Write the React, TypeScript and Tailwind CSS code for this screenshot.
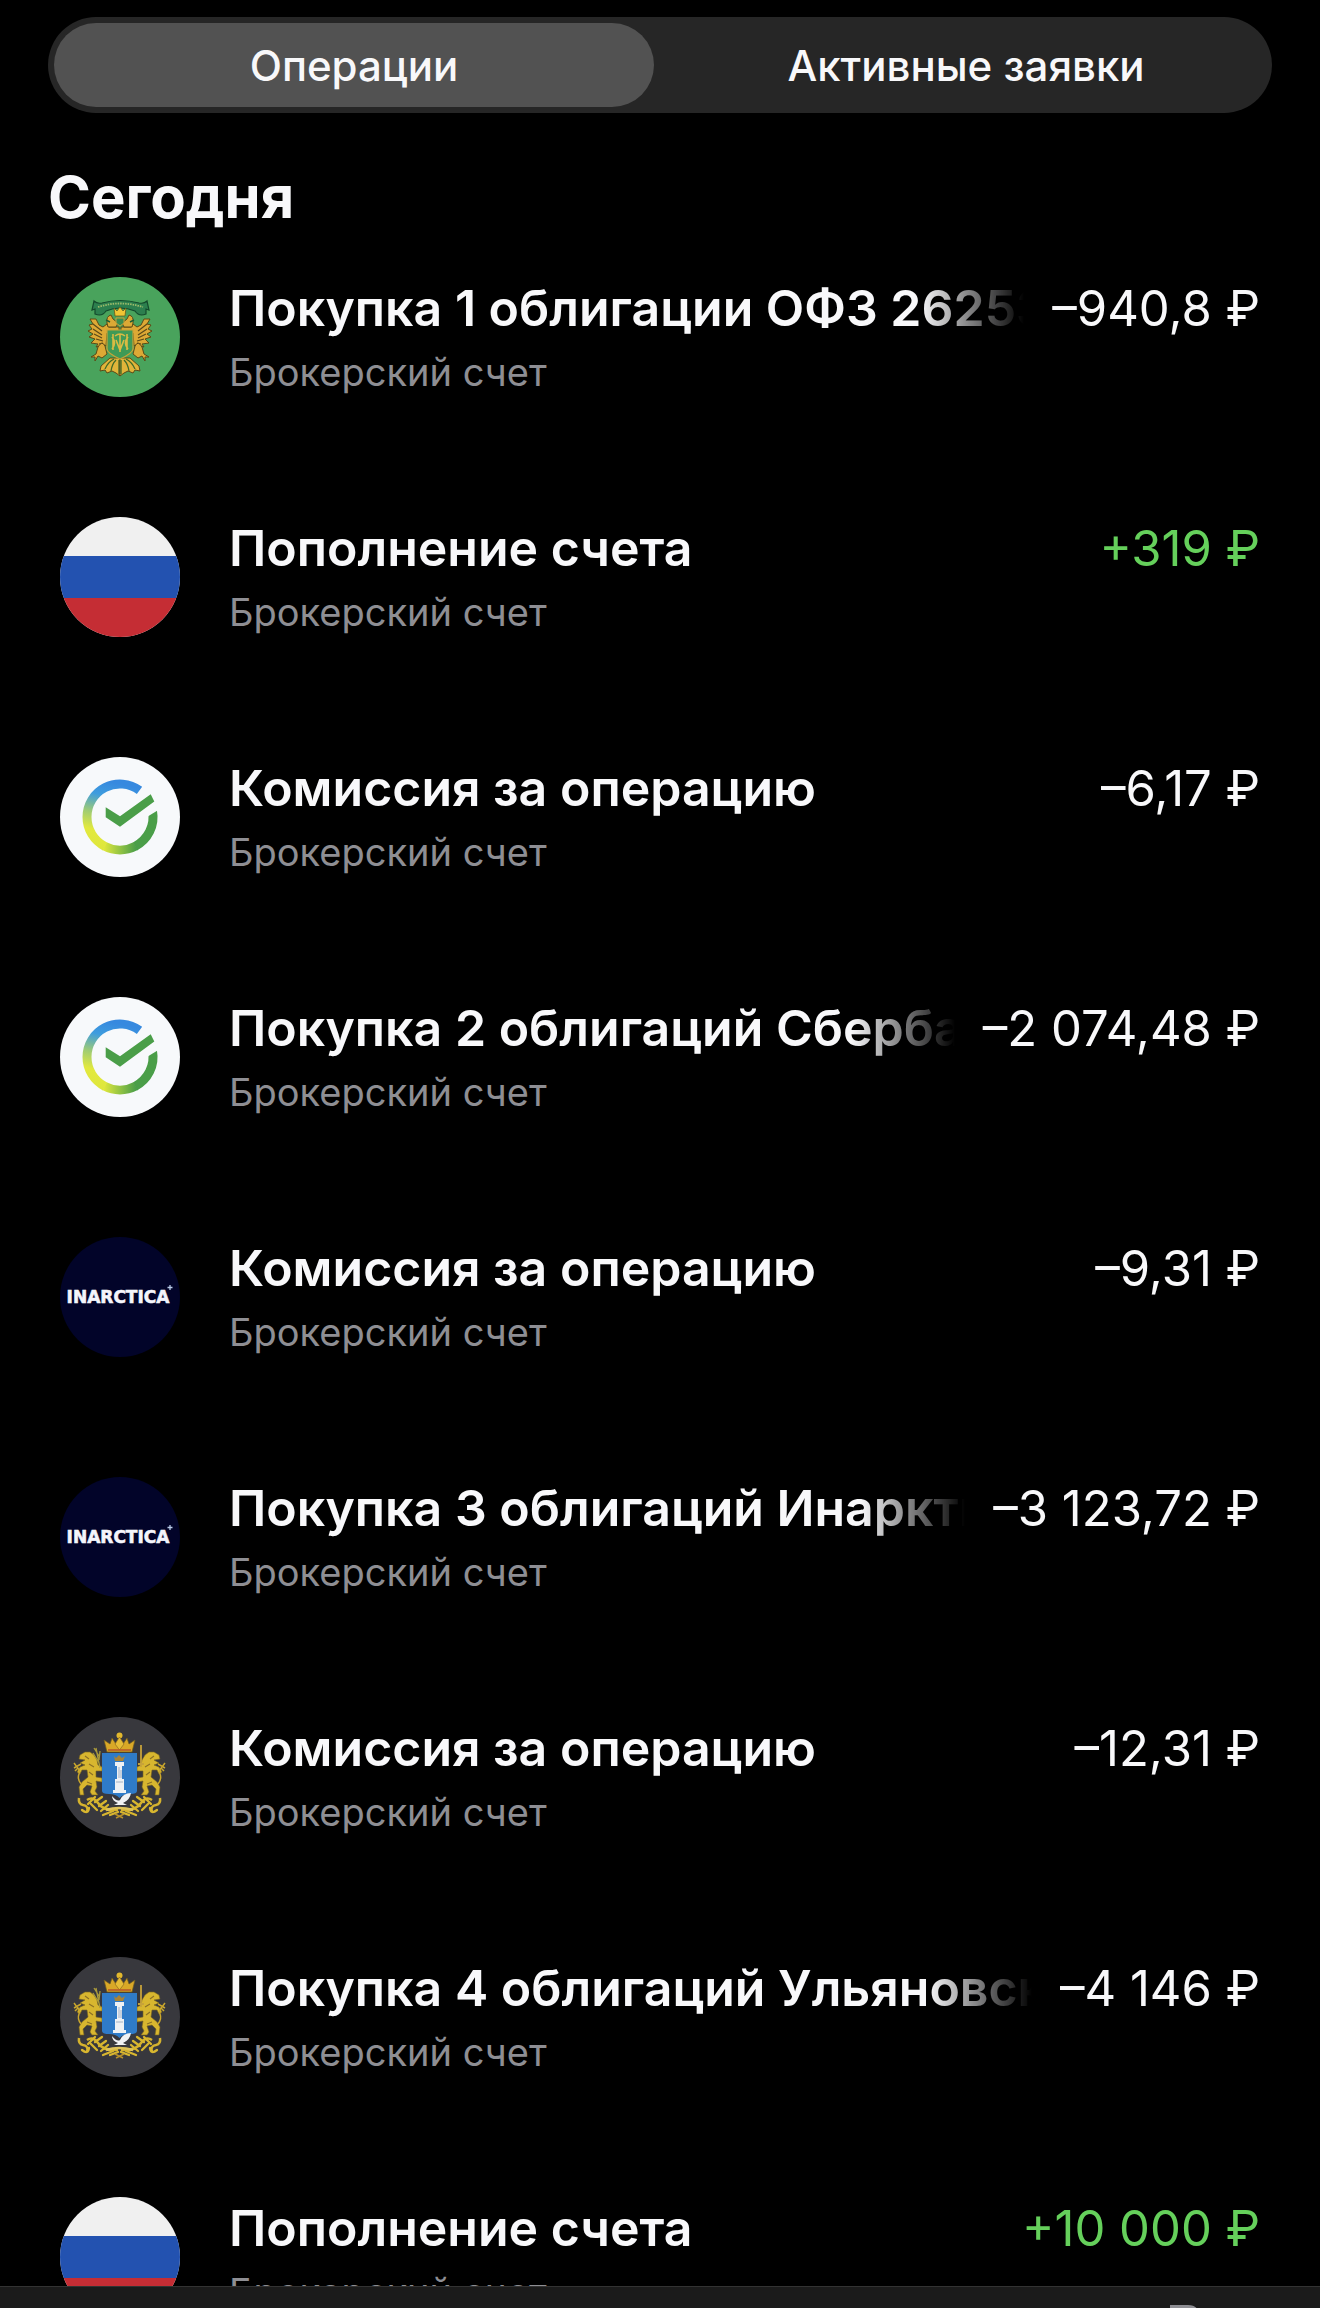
import React, { useState } from "react"

type Logo = "ofz" | "russia" | "sber" | "inarctica" | "ulyanovsk"

type Operation = {
  id: number
  logo: Logo
  title: string
  amount: string
  income?: boolean
}

const operations: Operation[] = [
  { id: 1, logo: "ofz", title: "Покупка 1 облигации ОФЗ 26253", amount: "–940,8 ₽" },
  { id: 2, logo: "russia", title: "Пополнение счета", amount: "+319 ₽", income: true },
  { id: 3, logo: "sber", title: "Комиссия за операцию", amount: "–6,17 ₽" },
  { id: 4, logo: "sber", title: "Покупка 2 облигаций Сбербанк", amount: "–2 074,48 ₽" },
  { id: 5, logo: "inarctica", title: "Комиссия за операцию", amount: "–9,31 ₽" },
  { id: 6, logo: "inarctica", title: "Покупка 3 облигаций Инарктика", amount: "–3 123,72 ₽" },
  { id: 7, logo: "ulyanovsk", title: "Комиссия за операцию", amount: "–12,31 ₽" },
  { id: 8, logo: "ulyanovsk", title: "Покупка 4 облигаций Ульяновская", amount: "–4 146 ₽" },
  { id: 9, logo: "russia", title: "Пополнение счета", amount: "+10 000 ₽", income: true },
]

const tabs = ["Операции", "Активные заявки"]

const OfzLogo = () => (
  <svg viewBox="0 0 120 120" className="size-full bg-[#49a35c]" aria-hidden="true">
    {/* ribbon */}
    <path d="M32 33 34 24Q37 27 42 26 60 21 79 26 84 27 87 24L89 33 86 32 86 37Q79 40 75 34Q60 28 46 34Q42 40 35 37L35 32Z" fill="#2c7f4e" stroke="#134a2c" strokeWidth="1.2" />
    <path d="M38 30Q60 23 83 30" fill="none" stroke="#9dbb6a" strokeWidth="1.8" strokeDasharray="1.5 1" />
    {/* one half of the eagle, mirrored for the other */}
    {[0, 1].map((side) => (
      <g key={side} transform={side ? "matrix(-1 0 0 1 120 0)" : undefined}>
        <path
          d="M59 50 49 50 47 47 43 50 39 48 36 42 30 42 33 47 29 48 32 52 28 54 33 57 29 60 35 62 31 66 38 67 36 70 44 68 46 69 47 56 59 54Z"
          fill="#dca935"
          stroke="#5b4a17"
          strokeWidth="1"
        />
        <path d="M33 47 42 54M33 52 42 58M34 57 42 61M36 62 43 64M39 67 43 66" stroke="#5c4a18" strokeWidth="1.2" />
        <path d="M47 46Q46 39 51 38L53 42 58 46 56 50 48 50Z" fill="#dca935" stroke="#5b4a17" strokeWidth="1" />
        <path d="M46 43 50 45" stroke="#1f5c34" strokeWidth="1.5" />
        <path d="M38 70Q42 63 45 69L47 77 42 81 38 79 35 84 35 80 31 80 36 77Z" fill="#dca935" stroke="#5b4a17" strokeWidth="1" />
        <path d="M60 81 50 81 41 89 40 94 45 93 47 96 52 94 56 96 60 99Z" fill="#e0b43a" stroke="#5b4a17" strokeWidth="1" />
        <path d="M54 82Q48 85 45 92M56 83Q52 87 51 94M59 83V97" fill="none" stroke="#3f6a28" strokeWidth="1.3" />
      </g>
    ))}
    <path d="M47 53H73V72Q73 76 60 82Q47 76 47 72Z" fill="#3f9a56" stroke="#c9a336" strokeWidth="1.2" />
    <path d="M53 57V73M52 60Q57 66 52 72M60 57V75M55 59Q60 55 65 59M67 57V73M68 60Q63 66 68 72M56 63 60 73 64 63" fill="none" stroke="#d9bb43" strokeWidth="1.6" />
    <path d="M54 31 57 34 60 30 63 34 66 31 65 39H55Z" fill="#f0c534" stroke="#6a5a1a" strokeWidth=".8" />
    <path d="M56 41H64V46L60 49 56 46Z" fill="#3b8d50" stroke="#c9a336" />
  </svg>
)

const RussiaLogo = () => (
  <svg viewBox="0 0 120 120" className="size-full bg-[#f0f0f0]" aria-hidden="true">
    <rect y="39" width="120" height="42" fill="#2352b0" />
    <rect y="81" width="120" height="39" fill="#c52d34" />
  </svg>
)

const SberLogo = () => (
  <svg viewBox="0 0 120 120" className="size-full bg-[#f7f9fb]" aria-hidden="true">
    <defs>
      <linearGradient id="sber-left" gradientUnits="userSpaceOnUse" x1="60" y1="27" x2="45" y2="92">
        <stop offset="0" stopColor="#3689df" />
        <stop offset=".22" stopColor="#3f9dde" />
        <stop offset=".5" stopColor="#a0cc72" />
        <stop offset=".75" stopColor="#e2e93e" />
        <stop offset="1" stopColor="#dfe73d" />
      </linearGradient>
      <linearGradient id="sber-bottom" gradientUnits="userSpaceOnUse" x1="44" y1="0" x2="76" y2="0">
        <stop offset="0" stopColor="#dfe73d" />
        <stop offset=".5" stopColor="#93c443" />
        <stop offset="1" stopColor="#4a9e48" />
      </linearGradient>
    </defs>
    <path d="M75 89.4A33 33 0 0 0 92.500 54" fill="none" stroke="#4a9e48" strokeWidth="9" />
    <path d="M44.500 89.100A33 33 0 0 0 75.500 89.100" fill="none" stroke="url(#sber-bottom)" strokeWidth="9" />
    <path d="M79.500 33.400A33 33 0 0 0 27 60A33 33 0 0 0 45 89.400" fill="none" stroke="url(#sber-left)" strokeWidth="9" />
    <path d="M86 60.500 100 52 97 47 84 53Z" fill="#f7f9fb" />
    <path d="M45.700 50.300 60 59.300 90.700 37.300 94.300 44.500 60 69.700 45.700 60.300Z" fill="#4a9e48" />
  </svg>
)

const InarcticaLogo = () => (
  <svg viewBox="0 0 120 120" className="size-full bg-[#020429]" aria-hidden="true">
    <text
      x="58"
      y="66"
      textAnchor="middle"
      fill="#f4f5fb"
      stroke="#f4f5fb"
      strokeWidth=".6"
      fontFamily="DejaVu Sans, sans-serif"
      fontSize="17"
      fontWeight="700"
    >
      INARCTICA
    </text>
    <path d="M110 48V53M107.500 50.500H112.500" stroke="#b9cbe8" strokeWidth="1.300" />
  </svg>
)

const UlyanovskLogo = () => (
  <svg viewBox="0 0 120 120" className="size-full bg-[#38383d]" aria-hidden="true">
    {/* lion and oak branch, mirrored on the right */}
    {[0, 1].map((side) => (
      <g key={side} transform={side ? "matrix(-1 0 0 1 119 0)" : undefined}>
        <path
          d="M20 38 25 35 30 35 34 38 37 43 38 48 42 50 42 54 36 54 36 60 42 61 42 65 36 64 37 70 35 74 38 78 32 78 30 75 32 69 27 68 23 72 24 78 20 78 19 70 22 65 28 60 27 53 22 53 20 57 17 55 20 50 25 48 20 46 25 43 19 42Z"
          fill="#d8b62f"
          stroke="#7a6420"
          strokeWidth=".6"
        />
        <path d="M25 39 29 42M29 47 34 50M29 55 33 58M27 65 32 67" stroke="#8c7025" strokeWidth="1.100" />
        <path d="M21 67Q17 62 19 57Q20 52 17 50L14 46M14 51 21 47M18 51 15 54" fill="none" stroke="#caa72d" strokeWidth="1.500" />
        <path d="M19 81Q18 87 23 88Q29 89 27 95M27 83Q33 79 38 86Q43 94 58 93" fill="none" stroke="#d5b22e" strokeWidth="2.500" />
        <path d="M22 93Q28 98 29 91M28 87 35 80M35 85 42 80M39 89 46 84M41 94 48 88M43 98 53 94M50 98 58 95M31 87 37 93" fill="none" stroke="#d8b62f" strokeWidth="2.300" strokeLinecap="round" />
        <path d="M55 97 63 101" stroke="#b6902a" strokeWidth="1.500" />
        <path d="M60 35H47L44 23 50 27 52 21 56 27 60 20" fill="#d9a827" stroke="#6d5a20" strokeWidth=".7" />
      </g>
    ))}
    <path d="M40 51 36 31M39 46 33 36M39 43 40 34M39 39 34 31" stroke="#aa9a3a" strokeWidth="1.300" />
    <path d="M81 50V28M78 47H84" stroke="#c7a23a" strokeWidth="1.800" />
    <path d="M42 36H77V74Q77 77 70 77Q63 77 59.500 81Q56 77 49 77Q42 77 42 74Z" fill="#2f7bc8" />
    <circle cx="59.500" cy="18.500" r="3" fill="#e2b82d" />
    <path d="M59.500 20 55 27 59.500 33 64 27Z" fill="#e5bd37" stroke="#8d671e" strokeWidth=".7" />
    <path d="M48 33H71" stroke="#b5542d" strokeWidth="1.500" />
    <path d="M54 39 56 41 59 38 62 41 65 39 63 44H55Z" fill="#a88336" />
    <path d="M55 45H64V49H62V62H64V66H55V62H57V49H55ZM55 66H64V73H66V76H53V73H55Z" fill="#eef1f4" />
    <path d="M59 50V61M61 53V61M56 65H63" stroke="#a4b2c5" strokeWidth="1" />
    <path d="M52 79Q57 85 60 83Q63 76 71 76Q70 83 63 86L67 88H54L58 86Q52 84 52 79Z" fill="#f1f2f4" />
    <path d="M46 93Q59 89 73 93" fill="none" stroke="#dfc35b" strokeWidth="2.500" />
  </svg>
)

const logos: Record<Logo, React.ReactNode> = {
  ofz: <OfzLogo />,
  russia: <RussiaLogo />,
  sber: <SberLogo />,
  inarctica: <InarcticaLogo />,
  ulyanovsk: <UlyanovskLogo />,
}

const OperationItem = ({ item }: { item: Operation }) => {
  return (
    <li className="flex h-[240px] items-start gap-[49px]">
      <span className="size-[120px] shrink-0 overflow-hidden rounded-full">{logos[item.logo]}</span>
      <div className="min-w-0 flex-1">
        <div className="flex items-baseline gap-7">
          <h2 className="min-w-0 flex-1 overflow-hidden whitespace-nowrap text-[50px] font-semibold leading-[62px] [mask-image:linear-gradient(to_right,black_calc(100%-104px),transparent)]">
            {item.title}
          </h2>
          <p className={`shrink-0 text-[49px] leading-[60px] ${item.income ? "text-[#65d05b]" : ""}`}>{item.amount}</p>
        </div>
        <p className="mt-[10px] text-[38px] leading-[46px] text-[#8e8e93]">Брокерский счет</p>
      </div>
    </li>
  )
}

const App = () => {
  const [active, setActive] = useState(0)

  return (
    <div className="flex h-screen flex-col overflow-hidden bg-black font-['Inter',sans-serif] text-[#f8f8fa]">
      <header className="shrink-0 px-12 pt-[17px]">
        <div role="tablist" className="flex h-24 gap-3 rounded-full bg-[#262626] p-1.5">
          {tabs.map((tab, index) => (
            <button
              key={tab}
              type="button"
              role="tab"
              aria-selected={active === index}
              onClick={() => setActive(index)}
              className={`flex-1 rounded-full text-[42px] font-medium ${active === index ? "bg-[#525252]" : ""}`}
            >
              {tab}
            </button>
          ))}
        </div>
      </header>
      <main className="min-h-0 flex-1 overflow-y-auto px-12 [scrollbar-width:none]">
        <h1 className="mt-12 text-[58px] font-bold leading-[72px]">Сегодня</h1>
        <ul className="mt-11 px-3">
          {operations.map((item) => (
            <OperationItem key={item.id} item={item} />
          ))}
        </ul>
      </main>
      <nav className="flex h-[22px] shrink-0 justify-end overflow-hidden border-t border-[#333333] bg-[#1b1b1b] pr-[120px] pt-[18px]">
        <svg viewBox="0 0 30 40" className="h-10 w-[30px]" aria-hidden="true">
          <path d="M2 38V2H18Q27 2 27 11T18 20H2" fill="none" stroke="#8e8e93" strokeWidth="4" />
        </svg>
      </nav>
    </div>
  )
}

export default App
